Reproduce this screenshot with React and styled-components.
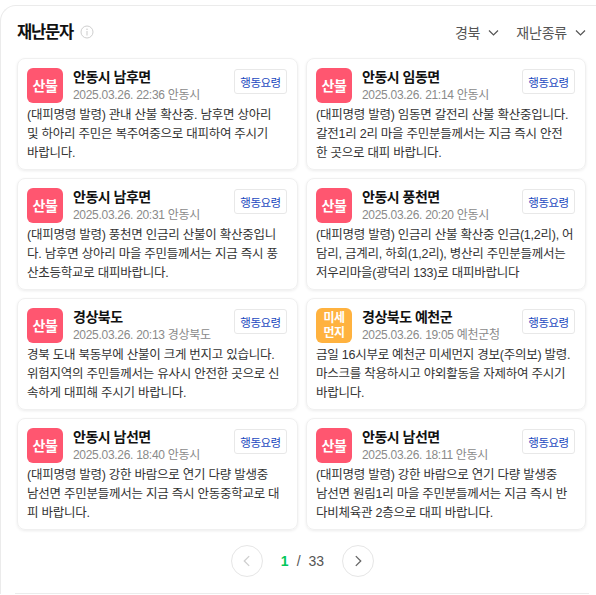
import React from 'react';
import styled, { createGlobalStyle } from 'styled-components';

const GlobalStyle = createGlobalStyle`
  body {
    margin: 0;
    background: #fff;
    font-family: "Liberation Sans", "Noto Sans CJK KR", sans-serif;
  }
`;

const Panel = styled.section`
  margin-top: 5px;
  width: 620px;
  border-top: 1px solid #ebebeb;
  border-left: 1px solid #ebebeb;
  border-top-left-radius: 16px;
  box-sizing: border-box;
`;

const Header = styled.header`
  display: flex;
  align-items: center;
  justify-content: space-between;
  width: 569px;
  padding: 13px 0 0 16px;
  height: 26px;
  margin-bottom: 13px;
`;

const TitleWrap = styled.div`
  display: flex;
  align-items: center;
  gap: 7px;
`;

const Title = styled.h2`
  margin: 0;
  font-size: 16.5px;
  font-weight: 700;
  letter-spacing: -1.2px;
  color: #111;
  line-height: 26px;
`;

const Filters = styled.div`
  display: flex;
  align-items: center;
  gap: 17px;
`;

const Filter = styled.button`
  display: flex;
  align-items: center;
  gap: 8px;
  border: 0;
  background: none;
  padding: 0;
  font-family: inherit;
  font-size: 14px;
  letter-spacing: -0.2px;
  color: #555;
`;

const Grid = styled.div`
  display: grid;
  grid-template-columns: 281px 280px;
  column-gap: 8px;
  row-gap: 8px;
  padding-left: 16px;
`;

const Card = styled.article`
  border: 1px solid #f0f0f0;
  border-radius: 8px;
  box-shadow: 0 1px 3px rgba(0, 0, 0, 0.08);
  padding: 9px 10px 9px 9px;
  height: 112px;
  box-sizing: border-box;
`;

const Top = styled.div`
  display: flex;
  align-items: flex-start;
  gap: 10px;
`;

const Badge = styled.div`
  flex: none;
  width: 36px;
  height: 35px;
  border-radius: 6px;
  background: ${p => (p.$kind === 'dust' ? '#ffb23f' : '#ff5670')};
  color: #fff;
  display: flex;
  align-items: center;
  justify-content: center;
  text-align: center;
  font-weight: 700;
  font-size: ${p => (p.$kind === 'dust' ? '12px' : '14px')};
  line-height: ${p => (p.$kind === 'dust' ? '15px' : '1')};
  letter-spacing: -0.5px;
  white-space: pre-line;
`;

const Heading = styled.div`
  flex: 1;
  min-width: 0;
`;

const Place = styled.div`
  font-size: 14px;
  font-weight: 700;
  letter-spacing: -0.5px;
  color: #111;
  line-height: 18px;
`;

const Meta = styled.div`
  font-size: 12px;
  letter-spacing: -0.3px;
  color: #8a8a8a;
  line-height: 18px;
`;

const GuideButton = styled.button`
  flex: none;
  width: 53px;
  height: 25px;
  margin-top: 1px;
  border: 1px solid #e8e8e8;
  border-radius: 3px;
  background: #fff;
  padding: 0;
  font-family: inherit;
  font-size: 11.5px;
  letter-spacing: -0.5px;
  color: #1b49c0;
`;

const Body = styled.p`
  margin: 2px 0 0;
  font-size: 12.5px;
  letter-spacing: -0.25px;
  line-height: 19px;
  color: #333;
  white-space: pre-line;
`;

const Pager = styled.nav`
  display: flex;
  align-items: center;
  justify-content: center;
  gap: 18px;
  margin-top: 15px;
  width: 603px;
`;

const RoundButton = styled.button`
  width: 32px;
  height: 32px;
  border-radius: 50%;
  border: 1px solid #e6e6e6;
  background: #fff;
  display: flex;
  align-items: center;
  justify-content: center;
  padding: 0;
  color: ${p => (p.disabled ? '#cfcfcf' : '#666')};
`;

const PageText = styled.div`
  font-size: 14px;
  color: #555;
  display: flex;
  gap: 8px;
  min-width: 40px;
  justify-content: center;
`;

const Current = styled.span`
  color: #03c75a;
  font-weight: 700;
`;

const Divider = styled.div`
  margin: 16px 0 0 14px;
  width: 574px;
  height: 1px;
  background: #ececec;
`;

const Chevron = ({ dir = 'down', size = 11 }) => {
  const d = {
    down: 'M1 3.5 L5.5 8 L10 3.5',
    left: 'M7.5 1 L3 5.5 L7.5 10',
    right: 'M3.5 1 L8 5.5 L3.5 10',
  }[dir];
  return (
    <svg width={size} height={size} viewBox="0 0 11 11" fill="none">
      <path d={d} stroke="currentColor" strokeWidth="1.2" />
    </svg>
  );
};

const InfoIcon = () => (
  <svg width="14" height="14" viewBox="0 0 14 14" fill="none">
    <circle cx="7" cy="7" r="6" stroke="#cfcfcf" strokeWidth="1" />
    <circle cx="7" cy="4.2" r="0.8" fill="#cfcfcf" />
    <path d="M7 6 V10.5" stroke="#cfcfcf" strokeWidth="1.1" />
  </svg>
);

const messages = [
  {
    kind: 'fire',
    place: '안동시 남후면',
    meta: '2025.03.26. 22:36 안동시',
    text: '(대피명령 발령) 관내 산불 확산중. 남후면 상아리\n및 하아리 주민은 복주여중으로 대피하여 주시기\n바랍니다.',
  },
  {
    kind: 'fire',
    place: '안동시 임동면',
    meta: '2025.03.26. 21:14 안동시',
    text: '(대피명령 발령) 임동면 갈전리 산불 확산중입니다.\n갈전1리 2리 마을 주민분들께서는 지금 즉시 안전\n한 곳으로 대피 바랍니다.',
  },
  {
    kind: 'fire',
    place: '안동시 남후면',
    meta: '2025.03.26. 20:31 안동시',
    text: '(대피명령 발령) 풍천면 인금리 산불이 확산중입니\n다. 남후면 상아리 마을 주민들께서는 지금 즉시 풍\n산초등학교로 대피바랍니다.',
  },
  {
    kind: 'fire',
    place: '안동시 풍천면',
    meta: '2025.03.26. 20:20 안동시',
    text: '(대피명령 발령) 인금리 산불 확산중 인금(1,2리), 어\n담리, 금계리, 하회(1,2리), 병산리 주민분들께서는\n저우리마을(광덕리 133)로 대피바랍니다',
  },
  {
    kind: 'fire',
    place: '경상북도',
    meta: '2025.03.26. 20:13 경상북도',
    text: '경북 도내 북동부에 산불이 크게 번지고 있습니다.\n위험지역의 주민들께서는 유사시 안전한 곳으로 신\n속하게 대피해 주시기 바랍니다.',
  },
  {
    kind: 'dust',
    place: '경상북도 예천군',
    meta: '2025.03.26. 19:05 예천군청',
    text: '금일 16시부로 예천군 미세먼지 경보(주의보) 발령.\n마스크를 착용하시고 야외활동을 자제하여 주시기\n바랍니다.',
  },
  {
    kind: 'fire',
    place: '안동시 남선면',
    meta: '2025.03.26. 18:40 안동시',
    text: '(대피명령 발령) 강한 바람으로 연기 다량 발생중\n남선면 주민분들께서는 지금 즉시 안동중학교로 대\n피 바랍니다.',
  },
  {
    kind: 'fire',
    place: '안동시 남선면',
    meta: '2025.03.26. 18:11 안동시',
    text: '(대피명령 발령) 강한 바람으로 연기 다량 발생중\n남선면 원림1리 마을 주민분들께서는 지금 즉시 반\n다비체육관 2층으로 대피 바랍니다.',
  },
];

const AlertCard = ({ kind, place, meta, text }) => (
  <Card>
    <Top>
      <Badge $kind={kind}>{kind === 'dust' ? '미세\n먼지' : '산불'}</Badge>
      <Heading>
        <Place>{place}</Place>
        <Meta>{meta}</Meta>
      </Heading>
      <GuideButton>행동요령</GuideButton>
    </Top>
    <Body>{text}</Body>
  </Card>
);

export default function App() {
  return (
    <>
      <GlobalStyle />
      <Panel>
        <Header>
          <TitleWrap>
            <Title>재난문자</Title>
            <InfoIcon />
          </TitleWrap>
          <Filters>
            <Filter>경북 <Chevron /></Filter>
            <Filter>재난종류 <Chevron /></Filter>
          </Filters>
        </Header>
        <Grid>
          {messages.map((m, i) => (
            <AlertCard key={i} {...m} />
          ))}
        </Grid>
        <Pager>
          <RoundButton disabled aria-label="이전">
            <Chevron dir="left" size={12} />
          </RoundButton>
          <PageText>
            <Current>1</Current>
            <span>/</span>
            <span>33</span>
          </PageText>
          <RoundButton aria-label="다음">
            <Chevron dir="right" size={12} />
          </RoundButton>
        </Pager>
        <Divider />
      </Panel>
    </>
  );
}
